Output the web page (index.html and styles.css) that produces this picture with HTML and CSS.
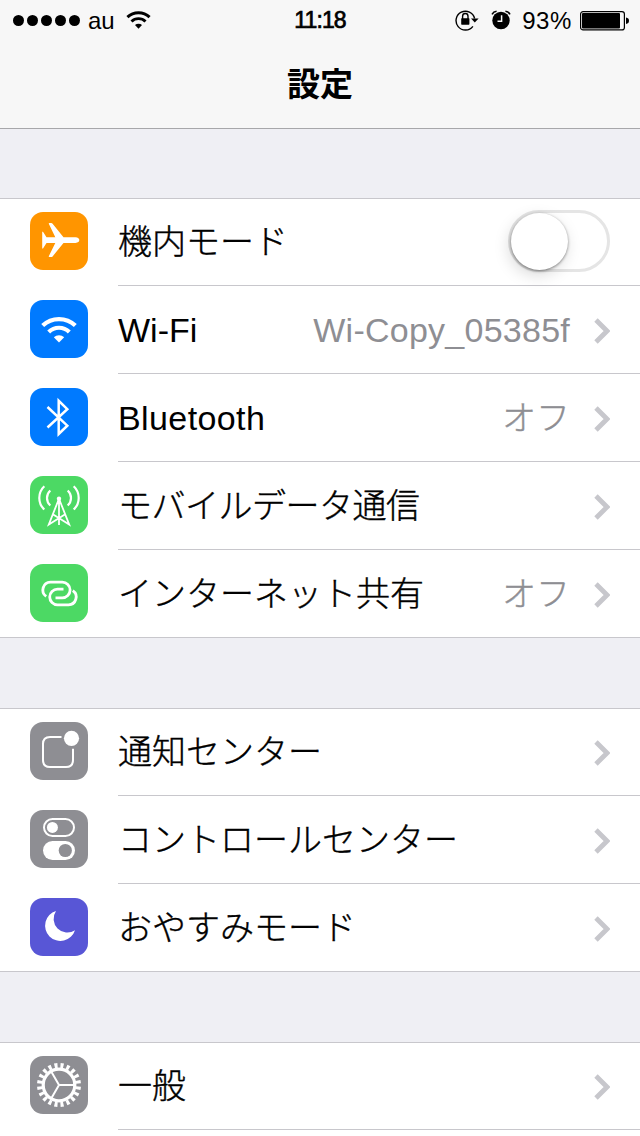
FILE: index.html
```html
<!DOCTYPE html>
<html lang="ja">

    <head>
        <meta charset="UTF-8">
        <meta name="viewport" content="width=device-width, initial-scale=1.0">
        <title>設定</title>

        <link rel="stylesheet" href="styles.css">
    </head>

    <body>
        <div class="header">
            <div class="status">
                <div class="status-left">
                    <div class="signal"><i></i><i></i><i></i><i></i><i></i></div>
                    <span class="carrier">au</span>
                    <svg class="status-wifi" viewBox="11 16.5 36 26.5" width="25" height="18">
                        <g fill="none" stroke="#000" stroke-width="4.4">
                            <path d="M12.7 25.6A23.5 23.5 0 0 1 45.3 25.6"/>
                            <path d="M18.7 31.9A14.8 14.8 0 0 1 39.3 31.9"/>
                        </g>
                        <path d="M29 42.5L23.8 37.2A7.6 7.6 0 0 1 34.2 37.2Z"/>
                    </svg>
                </div>
                <div class="time">11:18</div>
                <div class="status-right">
                    <svg class="lock" viewBox="0 0 24 22" width="24" height="22">
                        <path d="M17.9 17.4A9.4 9.4 0 1 1 19.6 9.5" fill="none" stroke="#000" stroke-width="1.4"/>
                        <path d="M16 9.6H23.6L19.8 13.6Z"/>
                        <rect x="6.2" y="9.2" width="8.2" height="6.5" rx=".6"/>
                        <path d="M7.6 10V7.2a2.7 2.7 0 0 1 5.4 0V10" fill="none" stroke="#000" stroke-width="1.4"/>
                    </svg>
                    <svg class="alarm" viewBox="0 0 20 20" width="20" height="20">
                        <circle cx="10" cy="10.5" r="8.7"/>
                        <path d="M1 4.3Q2.5 1.6 5.6 1.3M19 4.3Q17.5 1.6 14.4 1.3" fill="none" stroke="#000" stroke-width="1.6"/>
                        <path d="M10.6 5.3V11.3H6.5" fill="none" stroke="#f7f7f7" stroke-width="1.5"/>
                    </svg>
                    <span class="percent">93%</span>
                    <svg class="battery" viewBox="0 0 49 20" width="49" height="20">
                        <rect x=".6" y=".6" width="43.8" height="18.3" rx="2.5" fill="none" stroke="#000" stroke-width="1.2"/>
                        <rect x="2" y="2" width="38" height="15.5" rx="1"/>
                        <path d="M46 6.5Q49 7 49 9.8T46 13Z"/>
                    </svg>
                </div>
            </div>
            <h1>設定</h1>
        </div>

        <div class="group">
            <div class="row">
                <svg class="icon orange" viewBox="0 0 58 58">
                    <path fill="#fff" d="M12.2 19.7H13L16.5 25.2H25.3L18.8 11.8Q18.6 11 19.4 11H21.3Q22 11 22.6 11.7L33.5 25.2H45.5Q49.300 25.500 49.300 28.100T45.500 31H33.500L22.600 44.400Q22 45 21.300 45H19.400Q18.600 45 18.800 44.200L25.300 31H16.500L13 36.400H12.200Z"/>
                </svg>
                <div class="label">機内モード</div>
                <div class="toggle"><div class="knob"></div></div>
            </div>
            <div class="row">
                <svg class="icon blue" viewBox="0 0 58 58">
                    <g fill="none" stroke="#fff" stroke-width="4.2">
                        <path d="M12.7 25.6A23.5 23.5 0 0 1 45.3 25.6"/>
                        <path d="M18.7 31.9A14.8 14.8 0 0 1 39.3 31.9"/>
                    </g>
                    <path fill="#fff" d="M29 42.5L23.8 37.2A7.6 7.6 0 0 1 34.2 37.2Z"/>
                </svg>
                <div class="label latin">Wi-Fi</div>
                <div class="value latin network">Wi-Copy_05385f</div>
                <svg class="arrow" viewBox="0 0 16 26"><path d="M2 2L13 13L2 24"/></svg>
            </div>
            <div class="row">
                <svg class="icon blue" viewBox="0 0 58 58">
                    <path class="line" stroke-width="2.5" d="M17.5 19L37.3 37.7L28.7 46V12.8L37.3 21.2L17.5 39.5"/>
                </svg>
                <div class="label latin wide">Bluetooth</div>
                <div class="value">オフ</div>
                <svg class="arrow" viewBox="0 0 16 26"><path d="M2 2L13 13L2 24"/></svg>
            </div>
            <div class="row">
                <svg class="icon green" viewBox="0 0 58 58">
                    <g class="line" stroke-width="2.2">
                        <path d="M14.3 10.3Q9.3 15 9.3 22T14.3 33.500M43.700 10.300Q48.700 15 48.700 22T43.700 33.500"/>
                        <path d="M20.300 14.500Q17 17.500 17 22T20.300 29.500M37.700 14.500Q41 17.500 41 22T37.700 29.500"/>
                    </g>
                    <circle cx="29" cy="22.7" r="2.2" fill="#fff"/>
                    <path class="line" stroke-width="1.8" d="M29 23V49M28.5 24L18.8 48.5L34.8 38.5M29.5 24L39.2 48.5L23.2 38.5"/>
                </svg>
                <div class="label tight">モバイルデータ通信</div>
                <svg class="arrow" viewBox="0 0 16 26"><path d="M2 2L13 13L2 24"/></svg>
            </div>
            <div class="row">
                <svg class="icon green" viewBox="0 0 58 58">
                    <g class="line" stroke-width="2.8">
                        <path d="M16.2 32.4A7.8 7.8 0 0 1 20.5 18.2H32.3A7.8 7.8 0 0 1 32.3 33.8H25.5"/>
                        <path d="M42.8 26.6A7.8 7.8 0 0 1 38.5 40.800H27.500A7.800 7.800 0 0 1 27.500 25.200H33.500"/>
                    </g>
                </svg>
                <div class="label">インターネット共有</div>
                <div class="value">オフ</div>
                <svg class="arrow" viewBox="0 0 16 26"><path d="M2 2L13 13L2 24"/></svg>
            </div>
        </div>

        <div class="group">
            <div class="row">
                <svg class="icon gray" viewBox="0 0 58 58">
                    <path class="line" stroke-width="2" d="M31.500 15H20Q13 15 13 22V38Q13 45 20 45H36Q43 45 43 38V26.800"/>
                    <circle cx="41.500" cy="16.300" r="7.600" fill="#fff"/>
                </svg>
                <div class="label">通知センター</div>
                <svg class="arrow" viewBox="0 0 16 26"><path d="M2 2L13 13L2 24"/></svg>
            </div>
            <div class="row">
                <svg class="icon gray" viewBox="0 0 58 58">
                    <rect class="line" stroke-width="2" x="14" y="9" width="30" height="17" rx="8.5"/>
                    <circle cx="22.4" cy="17.4" r="5.5" fill="#fff"/>
                    <rect x="13" y="31" width="32" height="19" rx="9.5" fill="#fff"/>
                    <circle cx="35.3" cy="40.5" r="6.6" fill="#8e8e93"/>
                </svg>
                <div class="label">コントロールセンター</div>
                <svg class="arrow" viewBox="0 0 16 26"><path d="M2 2L13 13L2 24"/></svg>
            </div>
            <div class="row">
                <svg class="icon purple" viewBox="0 0 58 58">
                    <path fill="#fff" d="M26 13A15.3 15.3 0 1 0 45 32.3A13.8 13.8 0 0 1 26 13Z"/>
                </svg>
                <div class="label">おやすみモード</div>
                <svg class="arrow" viewBox="0 0 16 26"><path d="M2 2L13 13L2 24"/></svg>
            </div>
        </div>

        <div class="group last">
            <div class="row">
                <svg class="icon gray" viewBox="0 0 58 58">
                    <!-- 歯車 -->
                    <circle class="line" cx="29" cy="29" r="19.5" stroke-width="5" pathLength="40" stroke-dasharray="1 1" stroke-dashoffset="-.5"/>
                    <circle class="line" cx="29" cy="29" r="15.8" stroke-width="3.2"/>
                    <path class="line" stroke-width="2" d="M29 29H44M29 29L21.5 16M29 29L21.5 42"/>
                </svg>
                <div class="label">一般</div>
                <svg class="arrow" viewBox="0 0 16 26"><path d="M2 2L13 13L2 24"/></svg>
            </div>
        </div>
    </body>

</html>
```

FILE: styles.css
```css
* {
    margin: 0;
    padding: 0;
    box-sizing: border-box;
}

body {
    display: flex;
    flex-direction: column;
    gap: 70px;
    width: 640px;
    height: 1136px;
    overflow: hidden;

    background-color: #efeff4;
    color: black;
    font-family: "Liberation Sans", "Noto Sans CJK JP", sans-serif;
}

svg {
    display: block;
    flex-shrink: 0;
}

.header {
    height: 129px;
    margin-bottom: -1px;
    background-color: #f7f7f7;
    border-bottom: 1px solid #a7a7aa;
    flex-shrink: 0;
}

.status {
    display: grid;
    grid-template-columns: 1fr auto 1fr;
    height: 41px;
    font-size: 24px;
    line-height: 41px;
}

.status-left,
.status-right {
    display: flex;
    align-items: center;
}

.status-left {
    padding-left: 13px;
}

.status-right {
    justify-content: flex-end;
    padding-right: 11px;
}

.signal {
    display: flex;
    gap: 3px;
}

.signal i {
    width: 11px;
    height: 11px;
    border-radius: 50%;
    background-color: black;
}

.carrier {
    margin: 0 11px 0 8px;
}

.status-wifi {
    margin-top: -1px;
}

.lock {
    margin-top: -1px;
}

.time {
    font-size: 23px;
    letter-spacing: -0.9px;
    -webkit-text-stroke: 0.7px black;
}

.alarm {
    margin: -1px 11px 0 12px;
}

.percent {
    margin-right: 8px;
    letter-spacing: 0.6px;
}

h1 {
    text-align: center;
    font-size: 33px;
    font-weight: bold;
    line-height: 87px;
}

.group {
    background-color: white;
    border-top: 1px solid #c8c7cc;
    border-bottom: 1px solid #c8c7cc;
    flex-shrink: 0;
}

.group.last {
    flex: 1 0 94px;
    border-bottom: none;
}

.row {
    display: flex;
    height: 88px;
    padding: 14px 30px 0 30px;
    /* the line starts after the icon */
    background: linear-gradient(#c8c7cc, #c8c7cc) 118px 100% / 522px 1px no-repeat;
}

.row:first-child {
    height: 87px;
    padding-top: 13px;
}

.group:not(.last) .row:last-child {
    height: 87px;
    background: none;
}

.icon {
    width: 58px;
    height: 58px;
    margin-right: 30px;
    border-radius: 13px;
}

.orange {
    background-color: #ff9500;
}

.blue {
    background-color: #007aff;
}

.green {
    background-color: #4cd964;
}

.gray {
    background-color: #8e8e93;
}

.purple {
    background-color: #5856d6;
}

.line {
    fill: none;
    stroke: white;
}

.label,
.value {
    font-family: "Noto Sans CJK JP", sans-serif;
    font-size: 34px;
    font-weight: 300;
    line-height: 56px;
    white-space: nowrap;
    -webkit-text-stroke: 0.4px;
}

.label {
    flex: 1;
}

.value {
    color: #8e8e93;
}

.latin {
    font-family: "Liberation Sans", sans-serif;
    line-height: 60px;
    -webkit-text-stroke: 0;
}

.wide {
    letter-spacing: 0.4px;
}

.network {
    letter-spacing: 0.25px;
}

.tight {
    letter-spacing: -0.5px;
}

.arrow {
    width: 16px;
    height: 26px;
    margin: 17.5px 0 0 24px;
    fill: none;
    stroke: #c7c7cc;
    stroke-width: 4.8;
}

.toggle {
    width: 102px;
    height: 62px;
    margin-top: -2px;
    border: 3px solid #e5e5e5;
    border-radius: 31px;
}

.knob {
    width: 57px;
    height: 57px;
    margin: -0.5px 0 0 -0.5px;
    border-radius: 50%;
    background-color: white;
    box-shadow: 0 1px 3px rgba(0, 0, 0, 0.45), -2px 5px 16px rgba(0, 0, 0, 0.15);
}
```
